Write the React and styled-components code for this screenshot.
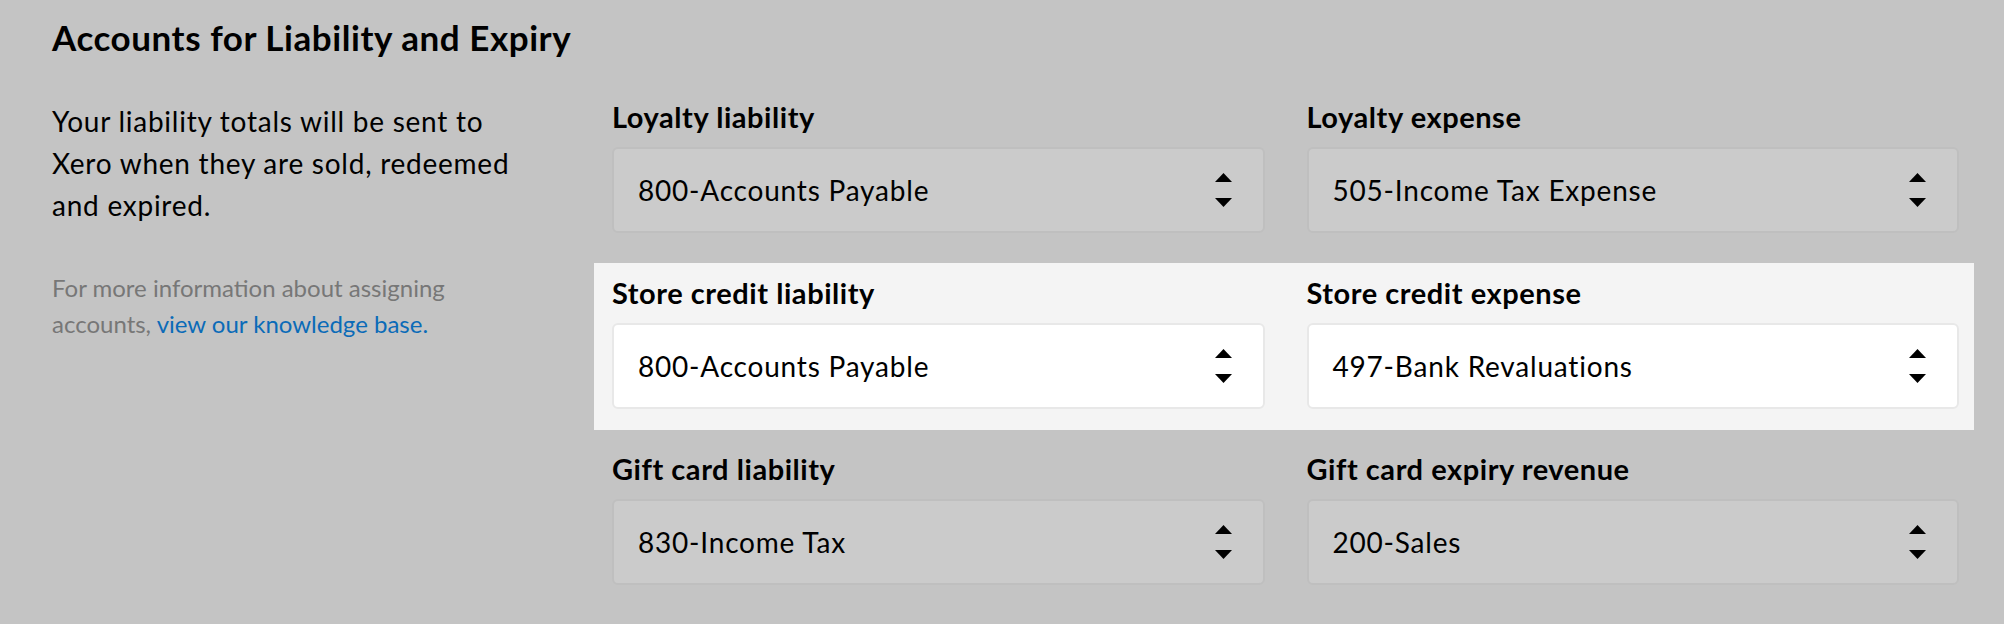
import React from "react";
import styled, { createGlobalStyle } from "styled-components";

const GlobalStyle = createGlobalStyle`
  body {
    margin: 0;
    background: #c4c4c4;
    font-family: Lato, "Noto Sans", sans-serif;
    color: #000;
  }
`;

const fields = [
  [
    { label: "Loyalty liability", value: "800-Accounts Payable" },
    { label: "Loyalty expense", value: "505-Income Tax Expense" },
  ],
  [
    { label: "Store credit liability", value: "800-Accounts Payable" },
    { label: "Store credit expense", value: "497-Bank Revaluations" },
  ],
  [
    { label: "Gift card liability", value: "830-Income Tax" },
    { label: "Gift card expiry revenue", value: "200-Sales" },
  ],
];

function Arrows() {
  return (
    <svg width="17" height="35" viewBox="0 0 17 35">
      <polygon points="8.5,0 17,9 0,9" fill="#000" />
      <polygon points="0,25 17,25 8.5,34" fill="#000" />
    </svg>
  );
}

function App() {
  return (
    <Page>
      <GlobalStyle />
      <Title>Accounts for Liability and Expiry</Title>
      <Body>
        <Intro>
          <Lead>
            Your liability totals will be sent to Xero when they are sold,
            redeemed and expired.
          </Lead>
          <Note>
            For more information about assigning accounts,{" "}
            <Link href="#">view our knowledge base.</Link>
          </Note>
        </Intro>
        <Rows>
          {fields.map((row, i) => (
            <Row key={i} active={i === 1}>
              {row.map((f) => (
                <Field key={f.label}>
                  <Label>{f.label}</Label>
                  <Select active={i === 1}>
                    <span>{f.value}</span>
                    <Arrows />
                  </Select>
                </Field>
              ))}
            </Row>
          ))}
        </Rows>
      </Body>
    </Page>
  );
}

export default App;

const Page = styled.div`
  padding: 16px 30px 0 52px;
`;
const Title = styled.h2`
  margin: 0;
  font-size: 35px;
  line-height: 42px;
  font-weight: 700;
  letter-spacing: 0.55px;
`;
const Body = styled.div`
  display: flex;
  margin-top: 29px;
`;
const Intro = styled.div`
  flex: 0 0 542px;
  box-sizing: border-box;
  padding: 13px 72px 0 0;
`;
const Lead = styled.p`
  margin: 0;
  font-size: 28px;
  line-height: 42px;
  letter-spacing: 0.75px;
`;
const Note = styled.p`
  margin: 44px 0 0;
  font-size: 24px;
  line-height: 36px;
  color: #777;
`;
const Link = styled.a`
  color: #0b6bb8;
  text-decoration: none;
`;
const Rows = styled.div`
  flex: 1;
  display: flex;
  flex-direction: column;
  gap: 9px;
`;
const Row = styled.div`
  display: grid;
  grid-template-columns: 1fr 1fr;
  column-gap: 42px;
  padding: 13px 15px 21px 18px;
  background: ${(p) => (p.active ? "#f4f4f4" : "transparent")};
`;
const Field = styled.div`
  display: flex;
  flex-direction: column;
`;
const Label = styled.div`
  font-size: 29px;
  line-height: 34px;
  font-weight: 700;
  letter-spacing: 0.55px;
  margin-bottom: 13px;
`;
const Select = styled.div`
  height: 86px;
  box-sizing: border-box;
  display: flex;
  align-items: center;
  justify-content: space-between;
  padding: 0 31px 0 24px;
  border: 2px solid ${(p) => (p.active ? "#e8e8e8" : "#bfbfbf")};
  border-radius: 6px;
  background: ${(p) => (p.active ? "#fff" : "#cbcbcb")};
  font-size: 28px;
  letter-spacing: 0.8px;
  color: #000;
`;
